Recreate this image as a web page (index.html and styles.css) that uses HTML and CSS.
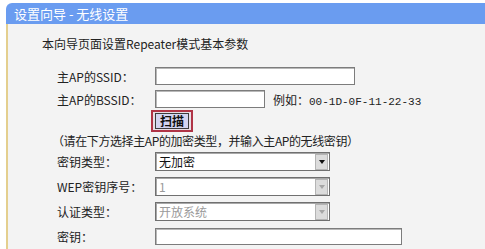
FILE: index.html
```html
<!DOCTYPE html>
<html lang="zh-CN">

<head>
    <meta charset="UTF-8">
    <title>设置向导 - 无线设置</title>
    <link rel="stylesheet" href="styles.css">
</head>

<body>
    <div class="title-bar">设置向导 - 无线设置</div>

    <div class="panel">
        <p class="intro">本向导页面设置Repeater模式基本参数</p>

        <div class="row row-first">
            <span class="label">主AP的SSID：</span>
            <div class="text-box ssid-box"></div>
        </div>

        <div class="row row-bssid">
            <span class="label">主AP的BSSID：</span>
            <div class="text-box bssid-box"></div>
            <span class="example">例如：<span class="mac">00-1D-0F-11-22-33</span></span>
        </div>

        <div class="scan-row">
            <div class="scan-frame"><button class="scan-button">扫描</button></div>
        </div>

        <p class="note">（请在下方选择主AP的加密类型，并输入主AP的无线密钥）</p>

        <div class="row">
            <span class="label">密钥类型：</span>
            <div class="select-box">
                <span class="select-text">无加密</span>
                <span class="select-arrow"><span class="triangle"></span></span>
            </div>
        </div>

        <div class="row">
            <span class="label">WEP密钥序号：</span>
            <div class="select-box disabled">
                <span class="select-text">1</span>
                <span class="select-arrow"><span class="triangle"></span></span>
            </div>
        </div>

        <div class="row">
            <span class="label">认证类型：</span>
            <div class="select-box disabled">
                <span class="select-text">开放系统</span>
                <span class="select-arrow"><span class="triangle"></span></span>
            </div>
        </div>

        <div class="row">
            <span class="label">密钥：</span>
            <div class="text-box key-box"></div>
        </div>
    </div>
</body>
</html>
```

FILE: styles.css
```css
body {
    margin: 0;
    background-color: white;
    font-family: "Noto Sans CJK SC", "DejaVu Sans", sans-serif;
    font-size: 12px;
    color: #222;
    height: 249px;
    overflow: hidden;
}

.title-bar {
    margin: 3px 0 0 6px;
    height: 21px;
    line-height: 21px;
    padding-left: 8px;
    background-color: #6a9cf0;
    border-top-left-radius: 6px;
    color: white;
    font-size: 13px;
}

.panel {
    margin-left: 6px;
    border-left: 2px solid #e4cf8e;
    background-color: #f3f3f3;
    height: 213px;
    padding-top: 12px;
}

.intro {
    margin: 0 0 12px 0;
    padding-left: 34px;
    line-height: 16px;
    font-size: 12px;
}

.row {
    display: flex;
    align-items: center;
    height: 25px;
    padding-left: 49px;
}

.row-first {
    height: 24px;
}

.row-bssid {
    height: 22px;
}

.label {
    width: 98px;
    white-space: nowrap;
}

.text-box {
    height: 16px;
    background-color: white;
    border: 1px solid #7c7c7c;
    box-shadow: inset 1px 1px #b8b8b8;
}

.ssid-box {
    width: 198px;
}

.bssid-box {
    width: 108px;
}

.key-box {
    width: 245px;
    height: 15px;
}

.example {
    margin-left: 8px;
}

.mac {
    font-family: "Liberation Mono", monospace;
    font-size: 11px;
}

.scan-row {
    height: 23px;
    padding-left: 143px;
}

.scan-frame {
    width: 38px;
    height: 18px;
    border: 2px solid #b03446;
    background-color: #e8dfe6;
    display: flex;
    align-items: center;
    justify-content: center;
}

.scan-button {
    width: 34px;
    height: 16px;
    padding: 0;
    border: 1px solid #3c3c3c;
    background-color: #d4d4f0;
    font-family: "Noto Sans CJK SC", sans-serif;
    font-size: 12px;
    font-weight: bold;
    line-height: 14px;
    color: #111;
}

.note {
    margin: 0;
    padding-left: 44px;
    height: 16px;
    line-height: 16px;
    font-size: 12px;
    letter-spacing: -0.4px;
}

.select-box {
    width: 173px;
    height: 17px;
    display: flex;
    align-items: center;
    justify-content: space-between;
    background-color: white;
    border: 1px solid #707070;
    box-shadow: inset 1px 1px #a8a8a8;
}

.select-text {
    padding-left: 3px;
    font-size: 12px;
    color: #111;
}

.select-arrow {
    width: 11px;
    height: 14px;
    margin-right: 1px;
    display: flex;
    align-items: center;
    justify-content: center;
    background-color: #dcdcdc;
    border: 1px solid #b4b4b4;
}

.triangle {
    width: 0;
    height: 0;
    border-left: 3px solid transparent;
    border-right: 3px solid transparent;
    border-top: 4px solid #111;
}

.disabled .select-text {
    color: #9a9a9a;
}

.disabled .triangle {
    border-top-color: #a6a6a6;
}
```
